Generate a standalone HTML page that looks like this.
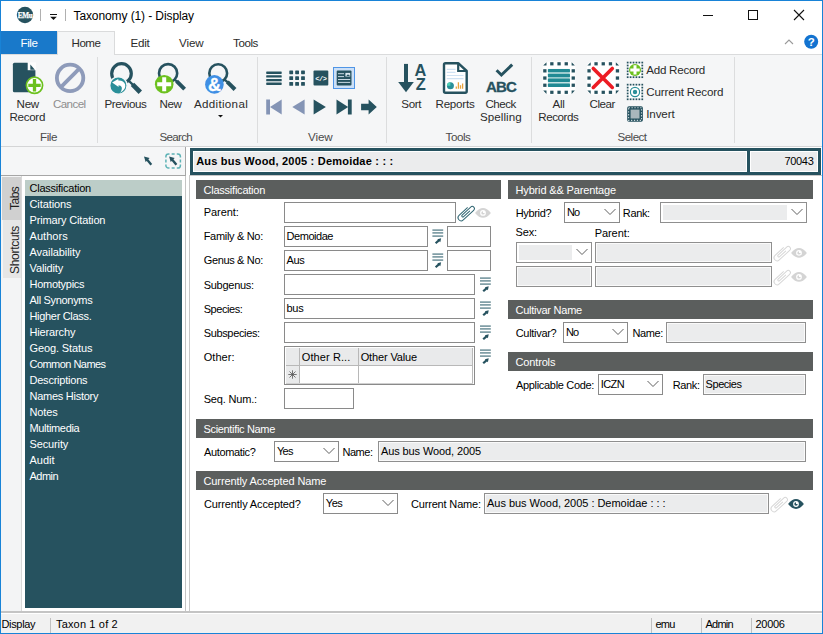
<!DOCTYPE html>
<html>
<head>
<meta charset="utf-8">
<title>Taxonomy (1) - Display</title>
<style>
*{box-sizing:border-box;margin:0;padding:0}
html,body{width:823px;height:634px;overflow:hidden;background:#fff}
body{position:relative;font-family:"Liberation Sans",sans-serif;font-size:11px;color:#000}
.a{position:absolute}
.t{position:absolute;white-space:pre;color:#000}
svg{position:absolute;overflow:visible}
</style>
</head>
<body>
<div class="a" style="left:0px;top:0px;width:823px;height:634px;background:#fff;border:1px solid #1883d7;"></div>
<div class="a" style="left:1px;top:31px;width:56px;height:23px;background:#1979ca;"></div>
<div class="a" style="left:1px;top:54px;width:821px;height:93px;background:#f5f6f7;border-top:1px solid #dadbdc;border-bottom:1px solid #d4d5d6;"></div>
<div class="a" style="left:57px;top:31px;width:58px;height:24px;background:#f5f6f7;border:1px solid #dadbdc;border-bottom:none;"></div>
<div class="a" style="left:97px;top:57px;width:1px;height:86px;background:#dcddde;"></div>
<div class="a" style="left:257px;top:57px;width:1px;height:86px;background:#dcddde;"></div>
<div class="a" style="left:386px;top:57px;width:1px;height:86px;background:#dcddde;"></div>
<div class="a" style="left:531px;top:57px;width:1px;height:86px;background:#dcddde;"></div>
<div class="a" style="left:734px;top:57px;width:1px;height:86px;background:#dcddde;"></div>
<div class="a" style="left:1px;top:147px;width:185px;height:29px;background:#f5f6f7;border-right:1px solid #a6a6a6;border-bottom:1px solid #a6a6a6;"></div>
<div class="a" style="left:190px;top:148px;width:631px;height:27px;background:#26525f;"></div>
<div class="a" style="left:193px;top:151px;width:554px;height:21px;background:#ebeced;border:1px solid #fff;"></div>
<div class="a" style="left:750px;top:151px;width:68px;height:21px;background:#ebeced;border:1px solid #fff;"></div>
<div class="a" style="left:1px;top:176px;width:185px;height:436px;background:#f3f4f5;"></div>
<div class="a" style="left:2px;top:177px;width:20px;height:43px;background:#d0d0d0;"></div>
<div class="a" style="left:3px;top:220px;width:19px;height:58px;background:#e6e6e6;"></div>
<div class="a" style="left:21px;top:176px;width:165px;height:436px;background:#fff;border-left:1px solid #d8d8d8;border-right:1px solid #c4c4c4;"></div>
<div class="a" style="left:25px;top:180px;width:157px;height:428px;background:#26525f;"></div>
<div class="a" style="left:25px;top:180px;width:157px;height:16px;background:#bccdc8;"></div>
<div class="t" style="left:8px;top:210px;font-size:12px;line-height:14px;transform-origin:0 0;transform:rotate(-90deg);color:#1e1e1e;letter-spacing:-0.5px">Tabs</div>
<div class="t" style="left:8px;top:274px;font-size:12px;line-height:14px;transform-origin:0 0;transform:rotate(-90deg);color:#1e1e1e;letter-spacing:-0.3px">Shortcuts</div>
<div class="a" style="left:189px;top:175px;width:633px;height:437px;background:#fff;border-left:1px solid #c8c8c8;border-top:1px solid #c8c8c8;"></div>
<div class="a" style="left:196px;top:180px;width:305px;height:19px;background:#5b5e5d;"></div>
<div class="a" style="left:508px;top:180px;width:305px;height:19px;background:#5b5e5d;"></div>
<div class="a" style="left:508px;top:300px;width:305px;height:19px;background:#5b5e5d;"></div>
<div class="a" style="left:508px;top:352px;width:305px;height:19px;background:#5b5e5d;"></div>
<div class="a" style="left:196px;top:419px;width:617px;height:19px;background:#5b5e5d;"></div>
<div class="a" style="left:196px;top:471px;width:617px;height:19px;background:#5b5e5d;"></div>
<div class="a" style="left:284px;top:202px;width:172px;height:21px;background:#fff;border:1px solid #8a8a8a;"></div>
<div class="a" style="left:284px;top:226px;width:144px;height:21px;background:#fff;border:1px solid #8a8a8a;"></div>
<div class="a" style="left:447px;top:226px;width:44px;height:21px;background:#fff;border:1px solid #8a8a8a;"></div>
<div class="a" style="left:284px;top:250px;width:144px;height:21px;background:#fff;border:1px solid #8a8a8a;"></div>
<div class="a" style="left:447px;top:250px;width:44px;height:21px;background:#fff;border:1px solid #8a8a8a;"></div>
<div class="a" style="left:284px;top:274px;width:191px;height:21px;background:#fff;border:1px solid #8a8a8a;"></div>
<div class="a" style="left:284px;top:298px;width:191px;height:21px;background:#fff;border:1px solid #8a8a8a;"></div>
<div class="a" style="left:284px;top:322px;width:191px;height:21px;background:#fff;border:1px solid #8a8a8a;"></div>
<div class="a" style="left:284px;top:346px;width:191px;height:39px;background:#fff;border:1px solid #8a8a8a;"></div>
<div class="a" style="left:286px;top:348px;width:187px;height:17px;background:#e9eaeb;"></div>
<div class="a" style="left:286px;top:365px;width:13px;height:18px;background:#e9eaeb;"></div>
<div class="a" style="left:299px;top:348px;width:1px;height:35px;background:#b8b8b8;"></div>
<div class="a" style="left:358px;top:348px;width:1px;height:35px;background:#b8b8b8;"></div>
<div class="a" style="left:472px;top:348px;width:1px;height:35px;background:#b8b8b8;"></div>
<div class="a" style="left:286px;top:365px;width:187px;height:1px;background:#b8b8b8;"></div>
<div class="a" style="left:286px;top:383px;width:187px;height:1px;background:#d0d0d0;"></div>
<div class="a" style="left:284px;top:388px;width:70px;height:21px;background:#fff;border:1px solid #8a8a8a;"></div>
<div class="a" style="left:564px;top:202px;width:56px;height:21px;background:#fff;border:1px solid #8a8a8a;"></div>
<svg style="left:604px;top:208.3px" width="12" height="9" viewBox="0 0 12 9"><path d="M0.5 1 L6 6.5 L11.5 1" fill="none" stroke="#606060" stroke-width="1"/></svg>
<div class="a" style="left:660px;top:202px;width:147px;height:21px;background:#fff;border:1px solid #8f8f8f;"></div>
<div class="a" style="left:663px;top:205px;width:124px;height:15px;background:#ebeced;"></div>
<svg style="left:791px;top:208.3px" width="12" height="9" viewBox="0 0 12 9"><path d="M0.5 1 L6 6.5 L11.5 1" fill="none" stroke="#606060" stroke-width="1"/></svg>
<div class="a" style="left:516px;top:242px;width:76px;height:21px;background:#fff;border:1px solid #8f8f8f;"></div>
<div class="a" style="left:519px;top:245px;width:53px;height:15px;background:#ebeced;"></div>
<svg style="left:576px;top:248.3px" width="12" height="9" viewBox="0 0 12 9"><path d="M0.5 1 L6 6.5 L11.5 1" fill="none" stroke="#606060" stroke-width="1"/></svg>
<div class="a" style="left:516px;top:266px;width:76px;height:21px;background:#ebeced;border:1px solid #8f8f8f;box-shadow:inset 0 0 0 1px #fafafa;"></div>
<div class="a" style="left:595px;top:242px;width:177px;height:21px;background:#ebeced;border:1px solid #8f8f8f;box-shadow:inset 0 0 0 1px #fafafa;"></div>
<div class="a" style="left:595px;top:266px;width:177px;height:21px;background:#ebeced;border:1px solid #8f8f8f;box-shadow:inset 0 0 0 1px #fafafa;"></div>
<div class="a" style="left:563px;top:322px;width:65px;height:21px;background:#fff;border:1px solid #8a8a8a;"></div>
<svg style="left:612px;top:328.3px" width="12" height="9" viewBox="0 0 12 9"><path d="M0.5 1 L6 6.5 L11.5 1" fill="none" stroke="#606060" stroke-width="1"/></svg>
<div class="a" style="left:666px;top:322px;width:140px;height:21px;background:#ebeced;border:1px solid #8f8f8f;box-shadow:inset 0 0 0 1px #fafafa;"></div>
<div class="a" style="left:598px;top:374px;width:65px;height:21px;background:#fff;border:1px solid #8a8a8a;"></div>
<svg style="left:647px;top:380.3px" width="12" height="9" viewBox="0 0 12 9"><path d="M0.5 1 L6 6.5 L11.5 1" fill="none" stroke="#606060" stroke-width="1"/></svg>
<div class="a" style="left:703px;top:374px;width:103px;height:21px;background:#ebeced;border:1px solid #8f8f8f;box-shadow:inset 0 0 0 1px #fafafa;"></div>
<div class="a" style="left:274px;top:441px;width:65px;height:21px;background:#fff;border:1px solid #8a8a8a;"></div>
<svg style="left:323px;top:447.3px" width="12" height="9" viewBox="0 0 12 9"><path d="M0.5 1 L6 6.5 L11.5 1" fill="none" stroke="#606060" stroke-width="1"/></svg>
<div class="a" style="left:378px;top:441px;width:428px;height:21px;background:#ebeced;border:1px solid #8f8f8f;box-shadow:inset 0 0 0 1px #fafafa;"></div>
<div class="a" style="left:323px;top:493px;width:75px;height:21px;background:#fff;border:1px solid #8a8a8a;"></div>
<svg style="left:382px;top:499.3px" width="12" height="9" viewBox="0 0 12 9"><path d="M0.5 1 L6 6.5 L11.5 1" fill="none" stroke="#606060" stroke-width="1"/></svg>
<div class="a" style="left:484px;top:493px;width:285px;height:21px;background:#ebeced;border:1px solid #8f8f8f;box-shadow:inset 0 0 0 1px #fafafa;"></div>
<div class="a" style="left:1px;top:611px;width:821px;height:22px;background:#f1f1f1;"></div>
<div class="a" style="left:1px;top:611px;width:821px;height:2px;background:#c4c4c4;"></div>
<div class="a" style="left:1px;top:613px;width:821px;height:1px;background:#fff;"></div>
<div class="a" style="left:50px;top:618px;width:1px;height:15px;background:#c0c0c0;"></div>
<div class="a" style="left:651px;top:618px;width:1px;height:15px;background:#c0c0c0;"></div>
<div class="a" style="left:701px;top:618px;width:1px;height:15px;background:#c0c0c0;"></div>
<div class="a" style="left:751px;top:618px;width:1px;height:15px;background:#c0c0c0;"></div>
<div class="t" style="left:73.5px;top:7.84px;font-size:12px;line-height:16px;letter-spacing:-0.1px;">Taxonomy (1) - Display</div>
<div class="t" style="left:20.5px;top:34.98px;font-size:11.6px;line-height:16px;letter-spacing:-0.42px;color:#fff;">File</div>
<div class="t" style="left:71.5px;top:34.98px;font-size:11.6px;line-height:16px;letter-spacing:-0.48px;color:#2b2b2b;">Home</div>
<div class="t" style="left:130.5px;top:34.98px;font-size:11.6px;line-height:16px;letter-spacing:-0.25px;color:#2b2b2b;">Edit</div>
<div class="t" style="left:179px;top:34.98px;font-size:11.6px;line-height:16px;letter-spacing:-0.11px;color:#2b2b2b;">View</div>
<div class="t" style="left:233px;top:34.98px;font-size:11.6px;line-height:16px;letter-spacing:-0.42px;color:#2b2b2b;">Tools</div>
<div class="t" style="left:16.5px;top:95.98px;font-size:11.6px;line-height:16px;letter-spacing:-0.23px;color:#2b2b2b;">New</div>
<div class="t" style="left:9.5px;top:108.98px;font-size:11.6px;line-height:16px;letter-spacing:-0.31px;color:#2b2b2b;">Record</div>
<div class="t" style="left:53px;top:95.98px;font-size:11.6px;line-height:16px;letter-spacing:-0.6px;color:#8e8e8e;">Cancel</div>
<div class="t" style="left:104.5px;top:95.98px;font-size:11.6px;line-height:16px;letter-spacing:-0.39px;color:#2b2b2b;">Previous</div>
<div class="t" style="left:159.5px;top:95.98px;font-size:11.6px;line-height:16px;letter-spacing:-0.4px;color:#2b2b2b;">New</div>
<div class="t" style="left:194px;top:95.98px;font-size:11.6px;line-height:16px;letter-spacing:0.31px;color:#2b2b2b;">Additional</div>
<div class="t" style="left:401.25px;top:95.98px;font-size:11.6px;line-height:16px;letter-spacing:-0.32px;color:#2b2b2b;">Sort</div>
<div class="t" style="left:435.5px;top:95.98px;font-size:11.6px;line-height:16px;letter-spacing:-0.23px;color:#2b2b2b;">Reports</div>
<div class="t" style="left:485.5px;top:95.98px;font-size:11.6px;line-height:16px;letter-spacing:-0.53px;color:#2b2b2b;">Check</div>
<div class="t" style="left:480px;top:108.98px;font-size:11.6px;line-height:16px;letter-spacing:0.06px;color:#2b2b2b;">Spelling</div>
<div class="t" style="left:552.5px;top:95.98px;font-size:11.6px;line-height:16px;letter-spacing:-0.3px;color:#2b2b2b;">All</div>
<div class="t" style="left:538.25px;top:108.98px;font-size:11.6px;line-height:16px;letter-spacing:-0.45px;color:#2b2b2b;">Records</div>
<div class="t" style="left:589.5px;top:95.98px;font-size:11.6px;line-height:16px;letter-spacing:-0.44px;color:#2b2b2b;">Clear</div>
<div class="t" style="left:646.25px;top:61.98px;font-size:11.6px;line-height:16px;letter-spacing:-0.25px;color:#2b2b2b;">Add Record</div>
<div class="t" style="left:646.25px;top:83.98px;font-size:11.6px;line-height:16px;letter-spacing:-0.16px;color:#2b2b2b;">Current Record</div>
<div class="t" style="left:646.25px;top:105.98px;font-size:11.6px;line-height:16px;letter-spacing:-0.12px;color:#2b2b2b;">Invert</div>
<div class="t" style="left:40px;top:129.48px;font-size:11.6px;line-height:16px;letter-spacing:-0.42px;color:#4a4a4a;">File</div>
<div class="t" style="left:159.4px;top:129.48px;font-size:11.6px;line-height:16px;letter-spacing:-0.67px;color:#4a4a4a;">Search</div>
<div class="t" style="left:308px;top:129.48px;font-size:11.6px;line-height:16px;letter-spacing:-0.11px;color:#4a4a4a;">View</div>
<div class="t" style="left:445.5px;top:129.48px;font-size:11.6px;line-height:16px;letter-spacing:-0.42px;color:#4a4a4a;">Tools</div>
<div class="t" style="left:617.5px;top:129.48px;font-size:11.6px;line-height:16px;letter-spacing:-0.54px;color:#4a4a4a;">Select</div>
<div class="t" style="left:196.2px;top:153.69px;font-size:11px;line-height:15px;letter-spacing:0.21px;font-weight:bold;">Aus bus Wood, 2005 : Demoidae : : :</div>
<div class="t" style="left:784.4px;top:153.69px;font-size:11px;line-height:15px;letter-spacing:-0.3px;">70043</div>
<div class="t" style="left:29.5px;top:180.69px;font-size:11px;line-height:15px;letter-spacing:-0.24px;">Classification</div>
<div class="t" style="left:29.5px;top:196.69px;font-size:11px;line-height:15px;letter-spacing:-0.09px;color:#fff;">Citations</div>
<div class="t" style="left:29.5px;top:212.69px;font-size:11px;line-height:15px;letter-spacing:-0.15px;color:#fff;">Primary Citation</div>
<div class="t" style="left:29.5px;top:228.69px;font-size:11px;line-height:15px;letter-spacing:0.04px;color:#fff;">Authors</div>
<div class="t" style="left:29.5px;top:244.69px;font-size:11px;line-height:15px;letter-spacing:-0.08px;color:#fff;">Availability</div>
<div class="t" style="left:29.5px;top:260.69px;font-size:11px;line-height:15px;letter-spacing:-0.13px;color:#fff;">Validity</div>
<div class="t" style="left:29.5px;top:276.69px;font-size:11px;line-height:15px;letter-spacing:-0.27px;color:#fff;">Homotypics</div>
<div class="t" style="left:29.5px;top:292.69px;font-size:11px;line-height:15px;letter-spacing:-0.31px;color:#fff;">All Synonyms</div>
<div class="t" style="left:29.5px;top:308.69px;font-size:11px;line-height:15px;letter-spacing:-0.32px;color:#fff;">Higher Class.</div>
<div class="t" style="left:29.5px;top:324.69px;font-size:11px;line-height:15px;letter-spacing:-0.14px;color:#fff;">Hierarchy</div>
<div class="t" style="left:29.5px;top:340.69px;font-size:11px;line-height:15px;letter-spacing:-0.11px;color:#fff;">Geog. Status</div>
<div class="t" style="left:29.5px;top:356.69px;font-size:11px;line-height:15px;letter-spacing:-0.54px;color:#fff;">Common Names</div>
<div class="t" style="left:29.5px;top:372.69px;font-size:11px;line-height:15px;letter-spacing:-0.22px;color:#fff;">Descriptions</div>
<div class="t" style="left:29.5px;top:388.69px;font-size:11px;line-height:15px;letter-spacing:-0.26px;color:#fff;">Names History</div>
<div class="t" style="left:29.5px;top:404.69px;font-size:11px;line-height:15px;letter-spacing:-0.13px;color:#fff;">Notes</div>
<div class="t" style="left:29.5px;top:420.69px;font-size:11px;line-height:15px;letter-spacing:-0.34px;color:#fff;">Multimedia</div>
<div class="t" style="left:29.5px;top:436.69px;font-size:11px;line-height:15px;letter-spacing:-0.13px;color:#fff;">Security</div>
<div class="t" style="left:29.5px;top:452.69px;font-size:11px;line-height:15px;letter-spacing:-0.02px;color:#fff;">Audit</div>
<div class="t" style="left:29.5px;top:468.69px;font-size:11px;line-height:15px;letter-spacing:-0.5px;color:#fff;">Admin</div>
<div class="t" style="left:203.5px;top:182.69px;font-size:11px;line-height:15px;letter-spacing:-0.23px;color:#fff;">Classification</div>
<div class="t" style="left:515.5px;top:182.69px;font-size:11px;line-height:15px;letter-spacing:-0.15px;color:#fff;">Hybrid &amp;&amp; Parentage</div>
<div class="t" style="left:515.5px;top:302.69px;font-size:11px;line-height:15px;letter-spacing:-0.25px;color:#fff;">Cultivar Name</div>
<div class="t" style="left:515.5px;top:354.69px;font-size:11px;line-height:15px;letter-spacing:-0.15px;color:#fff;">Controls</div>
<div class="t" style="left:203.5px;top:421.69px;font-size:11px;line-height:15px;letter-spacing:-0.33px;color:#fff;">Scientific Name</div>
<div class="t" style="left:203.5px;top:473.69px;font-size:11px;line-height:15px;letter-spacing:-0.11px;color:#fff;">Currently Accepted Name</div>
<div class="t" style="left:203.7px;top:204.69px;font-size:11px;line-height:15px;letter-spacing:-0.05px;">Parent:</div>
<div class="t" style="left:203.7px;top:228.69px;font-size:11px;line-height:15px;letter-spacing:-0.31px;">Family &amp; No:</div>
<div class="t" style="left:203.7px;top:252.69px;font-size:11px;line-height:15px;letter-spacing:-0.34px;">Genus &amp; No:</div>
<div class="t" style="left:203.7px;top:277.69px;font-size:11px;line-height:15px;letter-spacing:-0.27px;">Subgenus:</div>
<div class="t" style="left:203.7px;top:301.69px;font-size:11px;line-height:15px;letter-spacing:-0.43px;">Species:</div>
<div class="t" style="left:203.7px;top:325.69px;font-size:11px;line-height:15px;letter-spacing:-0.35px;">Subspecies:</div>
<div class="t" style="left:203.7px;top:349.69px;font-size:11px;line-height:15px;letter-spacing:0.04px;">Other:</div>
<div class="t" style="left:203.7px;top:391.69px;font-size:11px;line-height:15px;letter-spacing:-0.17px;">Seq. Num.:</div>
<div class="t" style="left:286.6px;top:228.69px;font-size:11px;line-height:15px;letter-spacing:-0.47px;">Demoidae</div>
<div class="t" style="left:286.6px;top:252.69px;font-size:11px;line-height:15px;letter-spacing:-0.36px;">Aus</div>
<div class="t" style="left:286.5px;top:300.69px;font-size:11px;line-height:15px;letter-spacing:-0.25px;">bus</div>
<div class="t" style="left:301.8px;top:349.69px;font-size:11px;line-height:15px;letter-spacing:0.09px;">Other R...</div>
<div class="t" style="left:360.7px;top:349.69px;font-size:11px;line-height:15px;letter-spacing:-0.14px;">Other Value</div>
<div class="t" style="left:515.7px;top:205.69px;font-size:11px;line-height:15px;letter-spacing:-0.34px;">Hybrid?</div>
<div class="t" style="left:567px;top:204.69px;font-size:11px;line-height:15px;letter-spacing:-0.93px;">No</div>
<div class="t" style="left:622.8px;top:205.69px;font-size:11px;line-height:15px;letter-spacing:-0.35px;">Rank:</div>
<div class="t" style="left:515.5px;top:224.69px;font-size:11px;line-height:15px;letter-spacing:-0.15px;">Sex:</div>
<div class="t" style="left:594.7px;top:225.69px;font-size:11px;line-height:15px;letter-spacing:-0.07px;">Parent:</div>
<div class="t" style="left:515.7px;top:325.69px;font-size:11px;line-height:15px;letter-spacing:-0.3px;">Cultivar?</div>
<div class="t" style="left:566px;top:324.69px;font-size:11px;line-height:15px;letter-spacing:-0.93px;">No</div>
<div class="t" style="left:632.6px;top:325.69px;font-size:11px;line-height:15px;letter-spacing:-0.42px;">Name:</div>
<div class="t" style="left:516px;top:377.69px;font-size:11px;line-height:15px;letter-spacing:-0.32px;">Applicable Code:</div>
<div class="t" style="left:600.8px;top:376.69px;font-size:11px;line-height:15px;letter-spacing:-0.62px;">ICZN</div>
<div class="t" style="left:672.7px;top:377.69px;font-size:11px;line-height:15px;letter-spacing:-0.37px;">Rank:</div>
<div class="t" style="left:705.6px;top:376.69px;font-size:11px;line-height:15px;letter-spacing:-0.45px;">Species</div>
<div class="t" style="left:203.9px;top:444.69px;font-size:11px;line-height:15px;letter-spacing:-0.34px;">Automatic?</div>
<div class="t" style="left:276.9px;top:443.69px;font-size:11px;line-height:15px;letter-spacing:-0.65px;">Yes</div>
<div class="t" style="left:342.4px;top:444.69px;font-size:11px;line-height:15px;letter-spacing:-0.44px;">Name:</div>
<div class="t" style="left:381px;top:443.69px;font-size:11px;line-height:15px;letter-spacing:-0.11px;">Aus bus Wood, 2005</div>
<div class="t" style="left:203.9px;top:496.69px;font-size:11px;line-height:15px;letter-spacing:-0.11px;">Currently Accepted?</div>
<div class="t" style="left:325.8px;top:495.69px;font-size:11px;line-height:15px;letter-spacing:-0.45px;">Yes</div>
<div class="t" style="left:410.9px;top:496.69px;font-size:11px;line-height:15px;letter-spacing:-0.16px;">Current Name:</div>
<div class="t" style="left:487px;top:495.69px;font-size:11px;line-height:15px;letter-spacing:-0.03px;">Aus bus Wood, 2005 : Demoidae : : :</div>
<div class="t" style="left:1.5px;top:617.09px;font-size:11px;line-height:15px;letter-spacing:-0.34px;">Display</div>
<div class="t" style="left:56px;top:617.09px;font-size:11px;line-height:15px;letter-spacing:0.16px;">Taxon 1 of 2</div>
<div class="t" style="left:655.4px;top:617.09px;font-size:11px;line-height:15px;letter-spacing:-0.74px;">emu</div>
<div class="t" style="left:705.5px;top:617.09px;font-size:11px;line-height:15px;letter-spacing:-0.78px;">Admin</div>
<div class="t" style="left:755.6px;top:617.09px;font-size:11px;line-height:15px;letter-spacing:-0.34px;">20006</div>
<svg width="823" height="634" viewBox="0 0 823 634" style="left:0;top:0"><circle cx="25" cy="15" r="8.2" fill="#26525f"/>
<text x="25" y="17.6" font-family="Liberation Serif,serif" font-weight="bold" font-size="7.2" fill="#fff" stroke="#fff" stroke-width="0.25" text-anchor="middle" letter-spacing="-0.3">EMu</text>
<rect x="40" y="9" width="1" height="12" fill="#b0b0b0"/>
<rect x="65" y="9" width="1" height="12" fill="#b0b0b0"/>
<rect x="50" y="14" width="7" height="1" fill="#111"/>
<path d="M50.2 16.8 L56.8 16.8 L53.5 20.1 Z" fill="#111"/>
<rect x="703" y="15" width="10" height="1" fill="#111"/>
<rect x="748.5" y="10.5" width="9" height="9" fill="none" stroke="#111" stroke-width="1"/>
<path d="M794 10 L804 20 M804 10 L794 20" stroke="#111" stroke-width="1.1" fill="none"/>
<path d="M785 44 L789 40 L793 44" stroke="#9a9a9a" stroke-width="1.1" fill="none"/>
<circle cx="811.2" cy="41.7" r="7" fill="#1373d0"/>
<text x="811.2" y="46" font-family="Liberation Sans,sans-serif" font-weight="bold" font-size="11.5" fill="#fff" text-anchor="middle">?</text>
<path d="M14.4 62.8 H27.7 L35.4 70.2 V90.8 Q35.4 92.3 33.9 92.3 H14.4 Q12.9 92.3 12.9 90.8 V64.3 Q12.9 62.8 14.4 62.8 Z" fill="#26525f"/>
<path d="M27.7 62.3 H36 V70.2 H27.7 Z" fill="#fdfdfd"/>
<path d="M30.3 64.6 V69.8 H34.9 Z" fill="#26525f"/>
<circle cx="34.5" cy="85.3" r="8.1" fill="#fff" stroke="#6cc11f" stroke-width="1.7"/>
<path d="M28.3 85.3 H40.7 M34.5 79.1 V91.5" stroke="#6cc11f" stroke-width="3.3" fill="none"/>
<circle cx="70.1" cy="77.9" r="13.2" fill="none" stroke="#8e9bba" stroke-width="3.8"/>
<path d="M60.9 87.1 L79.3 68.7" stroke="#8e9bba" stroke-width="3.8" fill="none"/>
<circle cx="121.5" cy="73.5" r="9.8" fill="none" stroke="#26525f" stroke-width="3.2"/>
<path d="M128.2 80.2 L133.0 84.9" stroke="#26525f" stroke-width="2.3" fill="none"/>
<path d="M132.5 84.4 L140.3 92.2" stroke="#26525f" stroke-width="4.8" fill="none"/>
<circle cx="118.4" cy="85.5" r="8.7" fill="#2a8f99" stroke="#f5f6f7" stroke-width="1.4"/>
<path d="M112.1 82.4 L118.3 78.9 L118.3 80.6 Q123.5 80.3 125.2 84.6 Q126.3 89.6 119.8 93 Q122.6 89.5 121.6 86.9 Q120.8 85.2 118.5 85.2 L118.6 87 Z" fill="#fff"/>
<circle cx="168.1" cy="73.2" r="9.1" fill="none" stroke="#26525f" stroke-width="2.6"/>
<path d="M174.3 79.4 L177.1 81.7" stroke="#26525f" stroke-width="2.3" fill="none"/>
<path d="M176.6 81.2 L184.6 89.2" stroke="#26525f" stroke-width="4" fill="none"/>
<circle cx="164.2" cy="84.2" r="9.3" fill="#6cc11f"/>
<path d="M157.2 84.2 H171.2 M164.2 77.2 V91.2" stroke="#fff" stroke-width="4" fill="none"/>
<circle cx="218.2" cy="73.2" r="8.9" fill="none" stroke="#26525f" stroke-width="2.6"/>
<path d="M224.3 79.3 L227.8 82.3" stroke="#26525f" stroke-width="2.3" fill="none"/>
<path d="M227.3 81.8 L235 89.5" stroke="#26525f" stroke-width="4" fill="none"/>
<circle cx="214.4" cy="84.4" r="9.3" fill="#3f8fe4"/>
<text x="214.6" y="90.9" font-family="Liberation Sans,sans-serif" font-weight="bold" font-size="18" fill="#fff" stroke="#fff" stroke-width="0.3" text-anchor="middle">&amp;</text>
<path d="M218 115 H223 L220.5 117.6 Z" fill="#111"/>
<rect x="266.2" y="71.5" width="15.5" height="2.4" rx="0.6" fill="#26525f"/>
<rect x="266.2" y="75.2" width="15.5" height="2.4" rx="0.6" fill="#26525f"/>
<rect x="266.2" y="78.9" width="15.5" height="2.4" rx="0.6" fill="#26525f"/>
<rect x="266.2" y="82.5" width="15.5" height="2.4" rx="0.6" fill="#26525f"/>
<rect x="289.3" y="70.4" width="3.8" height="3.8" rx="0.6" fill="#26525f"/>
<rect x="289.3" y="76.2" width="3.8" height="3.8" rx="0.6" fill="#26525f"/>
<rect x="289.3" y="82.0" width="3.8" height="3.8" rx="0.6" fill="#26525f"/>
<rect x="295.2" y="70.4" width="3.8" height="3.8" rx="0.6" fill="#26525f"/>
<rect x="295.2" y="76.2" width="3.8" height="3.8" rx="0.6" fill="#26525f"/>
<rect x="295.2" y="82.0" width="3.8" height="3.8" rx="0.6" fill="#26525f"/>
<rect x="301.1" y="70.4" width="3.8" height="3.8" rx="0.6" fill="#26525f"/>
<rect x="301.1" y="76.2" width="3.8" height="3.8" rx="0.6" fill="#26525f"/>
<rect x="301.1" y="82.0" width="3.8" height="3.8" rx="0.6" fill="#26525f"/>
<rect x="313.5" y="70.4" width="14.8" height="15" rx="1" fill="#26525f"/>
<text x="320.9" y="80.9" font-family="Liberation Mono,monospace" font-weight="bold" font-size="7" fill="#fff" text-anchor="middle" letter-spacing="-0.4">&lt;/&gt;</text>
<rect x="333.5" y="67.5" width="21" height="21" fill="#cce0f7" stroke="#4f95e6" stroke-width="1"/>
<rect x="336.7" y="70.4" width="14.8" height="15" rx="1" fill="#26525f"/>
<path d="M338 73.7 H344 M338 76.6 H344 M338 79.5 H350.2 M338 82.4 H350.2" stroke="#dbe8f0" stroke-width="0.9" fill="none"/>
<rect x="345.4" y="72.9" width="4.8" height="3.6" fill="#dbe8f0"/>
<path d="M346.3 76 L347.6 74.4 L349.5 75 L349.5 76 Z" fill="#26525f"/>
<rect x="266.2" y="99.5" width="3.8" height="15" fill="#8494b5"/>
<path d="M281.7 99.5 L270 107 L281.7 114.5 Z" fill="#8494b5"/>
<path d="M304.6 99.5 L292.3 107 L304.6 114.5 Z" fill="#8494b5"/>
<path d="M313.6 99.5 L325.9 107 L313.6 114.5 Z" fill="#26525f"/>
<path d="M336.5 99.5 L348.2 107 L336.5 114.5 Z" fill="#26525f"/>
<rect x="347.9" y="99.5" width="3.8" height="15" fill="#26525f"/>
<path d="M361.1 103.8 H368.6 V99.5 L376.8 107 L368.6 114.5 V110.2 H361.1 Z" fill="#26525f"/>
<rect x="404" y="63.9" width="4" height="19" fill="#26525f"/>
<path d="M398.2 82 H413.8 L406 92.2 Z" fill="#26525f"/>
<text x="420.4" y="75.7" font-family="Liberation Sans,sans-serif" font-weight="bold" font-size="16.4" fill="#26525f" text-anchor="middle">A</text>
<text x="420.8" y="89.7" font-family="Liberation Sans,sans-serif" font-weight="bold" font-size="16.4" fill="#26525f" text-anchor="middle">Z</text>
<path d="M445.5 63.2 H458.2 L466.7 71 V91.3 Q466.7 92.8 465.2 92.8 H445.5 Q444 92.8 444 91.3 V64.7 Q444 63.2 445.5 63.2 Z" fill="#fff" stroke="#26525f" stroke-width="2.4" stroke-linejoin="round"/>
<path d="M458.2 63.2 V71 H466.7" fill="none" stroke="#26525f" stroke-width="2.2"/>
<path d="M446.8 69.3 H455.5 M446.8 72.4 H455.5 M446.8 75.5 H463.5 M446.8 78.6 H463.5" stroke="#cfe2f3" stroke-width="1.2" fill="none"/>
<circle cx="450.4" cy="85.7" r="3.5" fill="#2a8f99"/>
<path d="M450.4 85.7 V82.2 A3.5 3.5 0 0 0 446.9 85.7 Z" fill="#4dd0b5"/>
<path d="M456.3 88.8 V86.5 M458.4 88.8 V82.3 M460.5 88.8 V85.2 M462.6 88.8 V83.6" stroke="#e8a33d" stroke-width="1.3" fill="none"/>
<path d="M496.6 70.3 L501.4 75 L512.2 64.6" stroke="#26525f" stroke-width="3" fill="none"/>
<text x="501.1" y="92.1" font-family="Liberation Sans,sans-serif" font-weight="bold" font-size="15" fill="#26525f" stroke="#26525f" stroke-width="0.3" text-anchor="middle" letter-spacing="-0.8">ABC</text>
<rect x="542.6" y="61.6" width="32.8" height="32.8" rx="6" fill="#fff"/>
<g fill="#26525f"><rect x="550.2" y="62.2" width="3.3" height="3.2"/><rect x="550.2" y="90.7" width="3.3" height="3.2"/><rect x="543.2" y="69.2" width="3.3" height="3.3"/><rect x="571.6" y="69.2" width="3.3" height="3.3"/><rect x="557.4" y="62.2" width="3.3" height="3.2"/><rect x="557.4" y="90.7" width="3.3" height="3.2"/><rect x="543.2" y="76.4" width="3.3" height="3.3"/><rect x="571.6" y="76.4" width="3.3" height="3.3"/><rect x="564.6" y="62.2" width="3.3" height="3.2"/><rect x="564.6" y="90.7" width="3.3" height="3.2"/><rect x="543.2" y="83.6" width="3.3" height="3.3"/><rect x="571.6" y="83.6" width="3.3" height="3.3"/><path d="M546.5 62.2 V65.5 H543.2 Z"/><path d="M571.6 62.2 V65.5 H574.9 Z"/><path d="M546.5 93.9 V90.6 H543.2 Z"/><path d="M571.6 93.9 V90.6 H574.9 Z"/></g>
<rect x="547.9" y="68.9" width="22.1" height="18.1" fill="#c4e2e3"/>
<rect x="547.9" y="68.9" width="22.1" height="3.4" rx="0.8" fill="#218a94"/>
<rect x="547.9" y="73.8" width="22.1" height="3.4" rx="0.8" fill="#218a94"/>
<rect x="547.9" y="78.6" width="22.1" height="3.4" rx="0.8" fill="#218a94"/>
<rect x="547.9" y="83.6" width="22.1" height="3.4" rx="0.8" fill="#218a94"/>
<rect x="586.8000000000001" y="61.6" width="32.8" height="32.8" rx="6" fill="#fff"/>
<g fill="#26525f"><rect x="594.4" y="62.2" width="3.3" height="3.2"/><rect x="594.4" y="90.7" width="3.3" height="3.2"/><rect x="587.4" y="69.2" width="3.3" height="3.3"/><rect x="615.8" y="69.2" width="3.3" height="3.3"/><rect x="601.6" y="62.2" width="3.3" height="3.2"/><rect x="601.6" y="90.7" width="3.3" height="3.2"/><rect x="587.4" y="76.4" width="3.3" height="3.3"/><rect x="615.8" y="76.4" width="3.3" height="3.3"/><rect x="608.8" y="62.2" width="3.3" height="3.2"/><rect x="608.8" y="90.7" width="3.3" height="3.2"/><rect x="587.4" y="83.6" width="3.3" height="3.3"/><rect x="615.8" y="83.6" width="3.3" height="3.3"/><path d="M590.7 62.2 V65.5 H587.4 Z"/><path d="M615.8 62.2 V65.5 H619.1 Z"/><path d="M590.7 93.9 V90.6 H587.4 Z"/><path d="M615.8 93.9 V90.6 H619.1 Z"/></g>
<path d="M593.3 68.4 L612.3 87.4 M612.3 68.4 L593.3 87.4" stroke="#ed1c24" stroke-width="3.6" stroke-linecap="round" fill="none"/>
<rect x="626.8" y="61.7" width="16.4" height="16.4" fill="#fff"/>
<g fill="#26525f"><rect x="626.80" y="61.70" width="1.75" height="1.75"/><rect x="626.80" y="76.30" width="1.75" height="1.75"/><rect x="629.72" y="61.70" width="1.75" height="1.75"/><rect x="629.72" y="76.30" width="1.75" height="1.75"/><rect x="626.80" y="64.62" width="1.75" height="1.75"/><rect x="641.40" y="64.62" width="1.75" height="1.75"/><rect x="632.64" y="61.70" width="1.75" height="1.75"/><rect x="632.64" y="76.30" width="1.75" height="1.75"/><rect x="626.80" y="67.54" width="1.75" height="1.75"/><rect x="641.40" y="67.54" width="1.75" height="1.75"/><rect x="635.56" y="61.70" width="1.75" height="1.75"/><rect x="635.56" y="76.30" width="1.75" height="1.75"/><rect x="626.80" y="70.46" width="1.75" height="1.75"/><rect x="641.40" y="70.46" width="1.75" height="1.75"/><rect x="638.48" y="61.70" width="1.75" height="1.75"/><rect x="638.48" y="76.30" width="1.75" height="1.75"/><rect x="626.80" y="73.38" width="1.75" height="1.75"/><rect x="641.40" y="73.38" width="1.75" height="1.75"/><rect x="641.40" y="61.70" width="1.75" height="1.75"/><rect x="641.40" y="76.30" width="1.75" height="1.75"/></g>
<circle cx="635" cy="69.9" r="6" fill="#6cc11f"/>
<path d="M630.3 69.9 H639.7 M635 65.2 V74.6" stroke="#fff" stroke-width="3" fill="none"/>
<rect x="626.8" y="83.8" width="16.4" height="16.4" fill="#fff"/>
<g fill="#26525f"><rect x="626.80" y="83.80" width="1.75" height="1.75"/><rect x="626.80" y="98.40" width="1.75" height="1.75"/><rect x="629.72" y="83.80" width="1.75" height="1.75"/><rect x="629.72" y="98.40" width="1.75" height="1.75"/><rect x="626.80" y="86.72" width="1.75" height="1.75"/><rect x="641.40" y="86.72" width="1.75" height="1.75"/><rect x="632.64" y="83.80" width="1.75" height="1.75"/><rect x="632.64" y="98.40" width="1.75" height="1.75"/><rect x="626.80" y="89.64" width="1.75" height="1.75"/><rect x="641.40" y="89.64" width="1.75" height="1.75"/><rect x="635.56" y="83.80" width="1.75" height="1.75"/><rect x="635.56" y="98.40" width="1.75" height="1.75"/><rect x="626.80" y="92.56" width="1.75" height="1.75"/><rect x="641.40" y="92.56" width="1.75" height="1.75"/><rect x="638.48" y="83.80" width="1.75" height="1.75"/><rect x="638.48" y="98.40" width="1.75" height="1.75"/><rect x="626.80" y="95.48" width="1.75" height="1.75"/><rect x="641.40" y="95.48" width="1.75" height="1.75"/><rect x="641.40" y="83.80" width="1.75" height="1.75"/><rect x="641.40" y="98.40" width="1.75" height="1.75"/></g>
<circle cx="635" cy="92" r="4.6" fill="#fff" stroke="#2a8f99" stroke-width="1.2"/>
<circle cx="635" cy="92" r="2.2" fill="#2a8f99"/>
<rect x="627.2" y="106.3" width="15.7" height="15.5" rx="1.8" fill="#26525f"/>
<rect x="628.6" y="107.7" width="12.9" height="12.7" fill="none" stroke="#c9d6da" stroke-width="1.1" stroke-dasharray="1.3 1.6"/>
<rect x="630.6" y="109.6" width="8.9" height="8.9" fill="#a9b7bc"/>
<path d="M144 156.4 L149.6 158.0 L145.6 162.0 Z" fill="#26525f"/>
<path d="M146.6 159.0 L151.3 164.8" stroke="#26525f" stroke-width="2.3" fill="none"/>
<path d="M165.9 157.5 V156.5 A2.6 2.6 0 0 1 168.5 153.9 H169.5 M176.8 153.9 H177.8 A2.6 2.6 0 0 1 180.4 156.5 V157.5 M180.4 164.4 V165.4 A2.6 2.6 0 0 1 177.8 168.0 H176.8 M169.5 168.0 H168.5 A2.6 2.6 0 0 1 165.9 165.4 V164.4 M171.65 153.9 H174.65 M171.65 168.0 H174.65 M165.9 159.45 V162.45 M180.4 159.45 V162.45" fill="none" stroke="#5eb3b6" stroke-width="1.5"/>
<path d="M169.1 156.4 L174.7 158.0 L170.7 162.0 Z" fill="#26525f"/>
<path d="M171.7 159.0 L176.4 164.8" stroke="#26525f" stroke-width="2.3" fill="none"/>
<path transform="translate(458.9 219.8) rotate(-42.9)" d="M14.5 -3.1 L3.1 -3.1 A3.1 3.1 0 0 0 3.1 3.1 L17.3 3.1 A2.2 2.2 0 0 0 17.3 -1.3 L5.6 -1.3 A1.1 1.1 0 0 0 5.6 0.9 L13.8 0.9" fill="none" stroke="#2d6370" stroke-width="0.95" stroke-linecap="round"/>
<path d="M475.1 212.9 Q479 208.0 483 208.0 Q487 208.0 490.9 212.9 Q487 217.8 483 217.8 Q479 217.8 475.1 212.9 Z" fill="#d4d4d4"/>
<circle cx="483" cy="212.9" r="2.9" fill="#fff"/>
<path d="M483 212.9 L483 211.20000000000002 A1.7 1.7 0 1 0 484.7 212.9 Z" fill="#d4d4d4"/>
<rect x="432.4" y="229.35" width="10.8" height="1.5" fill="#6d8f98"/>
<rect x="432.4" y="232.15" width="10.8" height="1.5" fill="#6d8f98"/>
<rect x="432.4" y="235.35" width="10.8" height="1.5" fill="#6d8f98"/>
<path d="M435.6 243.3 L439.2 240.1" stroke="#26525f" stroke-width="2.2" fill="none"/>
<path d="M441.1 238.3 L437.3 239.2 L440.3 242.2 Z" fill="#26525f"/>
<rect x="432.4" y="253.35" width="10.8" height="1.5" fill="#6d8f98"/>
<rect x="432.4" y="256.15" width="10.8" height="1.5" fill="#6d8f98"/>
<rect x="432.4" y="259.35" width="10.8" height="1.5" fill="#6d8f98"/>
<path d="M435.6 267.3 L439.2 264.1" stroke="#26525f" stroke-width="2.2" fill="none"/>
<path d="M441.1 262.3 L437.3 263.2 L440.3 266.2 Z" fill="#26525f"/>
<rect x="480" y="277.35" width="10.8" height="1.5" fill="#6d8f98"/>
<rect x="480" y="280.15" width="10.8" height="1.5" fill="#6d8f98"/>
<rect x="480" y="283.35" width="10.8" height="1.5" fill="#6d8f98"/>
<path d="M483.2 291.3 L486.8 288.1" stroke="#26525f" stroke-width="2.2" fill="none"/>
<path d="M488.7 286.3 L484.9 287.2 L487.9 290.2 Z" fill="#26525f"/>
<rect x="480" y="301.35" width="10.8" height="1.5" fill="#6d8f98"/>
<rect x="480" y="304.15" width="10.8" height="1.5" fill="#6d8f98"/>
<rect x="480" y="307.35" width="10.8" height="1.5" fill="#6d8f98"/>
<path d="M483.2 315.3 L486.8 312.1" stroke="#26525f" stroke-width="2.2" fill="none"/>
<path d="M488.7 310.3 L484.9 311.2 L487.9 314.2 Z" fill="#26525f"/>
<rect x="480" y="325.35" width="10.8" height="1.5" fill="#6d8f98"/>
<rect x="480" y="328.15" width="10.8" height="1.5" fill="#6d8f98"/>
<rect x="480" y="331.35" width="10.8" height="1.5" fill="#6d8f98"/>
<path d="M483.2 339.3 L486.8 336.1" stroke="#26525f" stroke-width="2.2" fill="none"/>
<path d="M488.7 334.3 L484.9 335.2 L487.9 338.2 Z" fill="#26525f"/>
<rect x="480" y="349.35" width="10.8" height="1.5" fill="#6d8f98"/>
<rect x="480" y="352.15" width="10.8" height="1.5" fill="#6d8f98"/>
<rect x="480" y="355.35" width="10.8" height="1.5" fill="#6d8f98"/>
<path d="M483.2 363.3 L486.8 360.1" stroke="#26525f" stroke-width="2.2" fill="none"/>
<path d="M488.7 358.3 L484.9 359.2 L487.9 362.2 Z" fill="#26525f"/>
<path transform="translate(774.9 259.8) rotate(-42.9)" d="M14.5 -3.1 L3.1 -3.1 A3.1 3.1 0 0 0 3.1 3.1 L17.3 3.1 A2.2 2.2 0 0 0 17.3 -1.3 L5.6 -1.3 A1.1 1.1 0 0 0 5.6 0.9 L13.8 0.9" fill="none" stroke="#d6d6d6" stroke-width="0.95" stroke-linecap="round"/>
<path d="M791.1 252.9 Q795 248.0 799 248.0 Q803 248.0 806.9 252.9 Q803 257.8 799 257.8 Q795 257.8 791.1 252.9 Z" fill="#d4d4d4"/>
<circle cx="799" cy="252.9" r="2.9" fill="#fff"/>
<path d="M799 252.9 L799 251.20000000000002 A1.7 1.7 0 1 0 800.7 252.9 Z" fill="#d4d4d4"/>
<path transform="translate(774.9 283.8) rotate(-42.9)" d="M14.5 -3.1 L3.1 -3.1 A3.1 3.1 0 0 0 3.1 3.1 L17.3 3.1 A2.2 2.2 0 0 0 17.3 -1.3 L5.6 -1.3 A1.1 1.1 0 0 0 5.6 0.9 L13.8 0.9" fill="none" stroke="#d6d6d6" stroke-width="0.95" stroke-linecap="round"/>
<path d="M791.1 276.9 Q795 272.0 799 272.0 Q803 272.0 806.9 276.9 Q803 281.79999999999995 799 281.79999999999995 Q795 281.79999999999995 791.1 276.9 Z" fill="#d4d4d4"/>
<circle cx="799" cy="276.9" r="2.9" fill="#fff"/>
<path d="M799 276.9 L799 275.2 A1.7 1.7 0 1 0 800.7 276.9 Z" fill="#d4d4d4"/>
<path transform="translate(771.9 510.8) rotate(-42.9)" d="M14.5 -3.1 L3.1 -3.1 A3.1 3.1 0 0 0 3.1 3.1 L17.3 3.1 A2.2 2.2 0 0 0 17.3 -1.3 L5.6 -1.3 A1.1 1.1 0 0 0 5.6 0.9 L13.8 0.9" fill="none" stroke="#d6d6d6" stroke-width="0.95" stroke-linecap="round"/>
<path d="M788.1 504 Q792 499.1 796 499.1 Q800 499.1 803.9 504 Q800 508.9 796 508.9 Q792 508.9 788.1 504 Z" fill="#26525f"/>
<circle cx="796" cy="504" r="2.9" fill="#fff"/>
<path d="M796 504 L796 502.3 A1.7 1.7 0 1 0 797.7 504 Z" fill="#26525f"/>
<path d="M292.5 370.3 V378.7 M288.3 374.5 H296.7 M289.5 371.5 L295.5 377.5 M295.5 371.5 L289.5 377.5" stroke="#555" stroke-width="0.8" fill="none"/></svg>
</body>
</html>
